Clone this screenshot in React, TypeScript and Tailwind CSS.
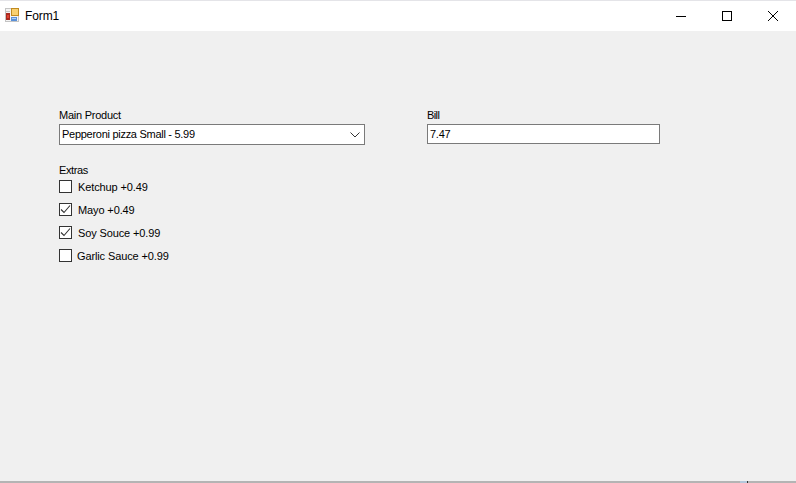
const extras = [
  { label: "Ketchup +0.49", checked: false, gap: "ml-[6px]" },
  { label: "Mayo +0.49", checked: true, gap: "ml-[6px]" },
  { label: "Soy Souce +0.99", checked: true, gap: "ml-[6px]" },
  { label: "Garlic Sauce +0.99", checked: false, gap: "ml-[5px]" },
];

function FormIcon() {
  return (
    <svg width="14" height="14" viewBox="0 0 14 14" className="mt-[-2px] shrink-0">
      <rect x="0" y="0" width="14" height="14" fill="#c4c4c4" />
      <rect x="1" y="1" width="12" height="12" fill="#f4f4f4" />
      <rect x="1" y="3" width="4" height="1" fill="#c4c4c4" />
      <rect x="6" y="0" width="8" height="8" fill="#c08a20" />
      <rect x="7" y="1" width="6" height="6" fill="#f8d070" />
      <rect x="1" y="5" width="4" height="7" fill="#a82a20" />
      <rect x="2" y="7" width="2" height="3" fill="#e04030" />
      <rect x="6" y="9" width="6" height="4" fill="#5a90d8" />
      <rect x="7" y="10" width="4" height="1" fill="#b0d0f0" />
    </svg>
  );
}

function TitleBar() {
  return (
    <div className="flex h-[31px] shrink-0 items-center justify-between border-t border-[#e4e4e8] bg-white">
      <div className="flex items-center pl-[5px]">
        <FormIcon />
        <span className="ml-[6px] text-[12px] tracking-[-0.1px] text-black">Form1</span>
      </div>
      <div className="flex items-center">
        <div className="flex h-[30px] w-[46px] items-center justify-center">
          <div className="h-px w-[10px] bg-black" />
        </div>
        <div className="flex h-[30px] w-[46px] items-center justify-center">
          <div className="h-[10px] w-[10px] border border-black" />
        </div>
        <div className="flex h-[30px] w-[46px] items-center justify-center">
          <svg width="10" height="10" viewBox="0 0 10 10">
            <path d="M0 0 L10 10 M10 0 L0 10" stroke="#000" strokeWidth="1" fill="none" />
          </svg>
        </div>
      </div>
    </div>
  );
}

export default function App() {
  return (
    <div className="flex h-[483px] w-[796px] flex-col overflow-hidden bg-[#f0f0f0] font-['Liberation_Sans',sans-serif] text-[11px] tracking-[-0.25px] text-black">
      <TitleBar />
      <div className="flex flex-1 gap-[62px] pl-[59px] pt-[77px]">
        <div className="w-[306px]">
          <div className="h-[16px] leading-[14px]">Main Product</div>
          <div className="flex h-[21px] items-center justify-between border border-[#7a7a7a] bg-white pl-[2px] pr-[3px]">
            <span className="tracking-[-0.28px]">Pepperoni pizza Small - 5.99</span>
            <svg width="10" height="6" viewBox="0 0 10 6" className="mr-[1px] mt-[1px]">
              <path d="M0.5 0.5 L5 5 L9.5 0.5" stroke="#333" strokeWidth="1" fill="none" />
            </svg>
          </div>
          <div className="mt-[18px] h-[12px] leading-[14px] tracking-[-0.4px]">Extras</div>
          <div className="flex flex-col">
            {extras.map((e) => (
              <div key={e.label} className="flex h-[23px] items-center">
                <div className="flex h-[13px] w-[13px] items-center justify-center border border-[#333] bg-white">
                  {e.checked && (
                    <svg width="11" height="11" viewBox="0 0 11 11">
                      <path d="M1 5.5 L4 8.5 L10 1.5" stroke="#333" strokeWidth="1.1" fill="none" />
                    </svg>
                  )}
                </div>
                <span className={`${e.gap} pt-[1px] tracking-[-0.12px]`}>{e.label}</span>
              </div>
            ))}
          </div>
        </div>
        <div className="w-[233px]">
          <div className="h-[16px] leading-[14px] tracking-[-0.6px]">Bill</div>
          <div className="flex h-[20px] items-center border border-[#7a7a7a] bg-white pl-[2px]">7.47</div>
        </div>
      </div>
      <div className="flex h-[2px] shrink-0 bg-[#b4b4b4]">
        <div className="ml-[740px] w-[7px] bg-[#b4c8dc]" />
        <div className="w-px bg-[#333]" />
      </div>
    </div>
  );
}
